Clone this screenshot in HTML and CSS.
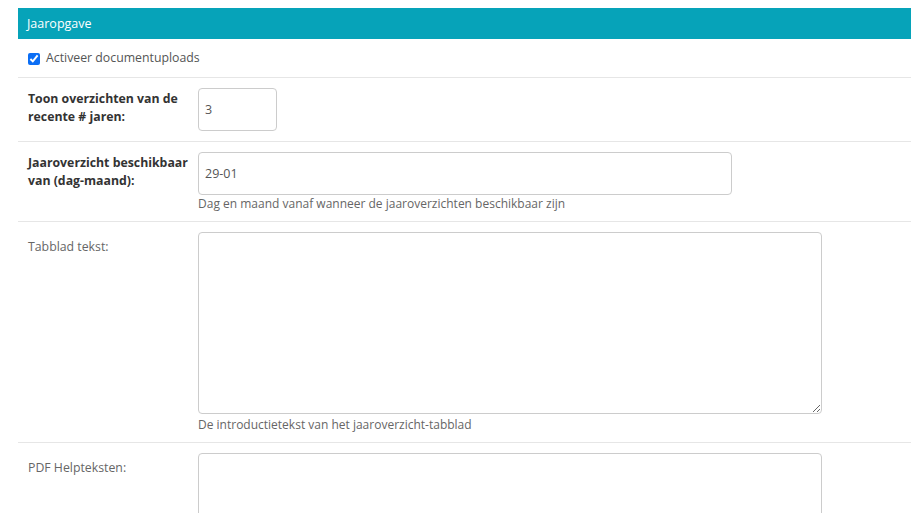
FILE: index.html
```html
<!DOCTYPE html>
<html lang="nl">
<head>
<meta charset="utf-8">
<title>Jaaropgave</title>
<link rel="stylesheet" href="styles.css">
</head>
<body>
<div class="panel">
  <div class="panel-head">Jaaropgave</div>
  <div class="row row-check">
    <label class="check"><input type="checkbox" checked> <span>Activeer documentuploads</span></label>
  </div>
  <div class="row">
    <div class="label bold">Toon overzichten van de recente # jaren:</div>
    <div class="field"><input class="input input-small" type="text" value="3"></div>
  </div>
  <div class="row">
    <div class="label bold">Jaaroverzicht beschikbaar van (dag-maand):</div>
    <div class="field">
      <input class="input input-wide" type="text" value="29-01">
      <div class="help">Dag en maand vanaf wanneer de jaaroverzichten beschikbaar zijn</div>
    </div>
  </div>
  <div class="row">
    <div class="label plain">Tabblad tekst:</div>
    <div class="field">
      <textarea class="area"></textarea>
      <div class="help help-area">De introductietekst van het jaaroverzicht-tabblad</div>
    </div>
  </div>
  <div class="row">
    <div class="label plain">PDF Helpteksten:</div>
    <div class="field">
      <textarea class="area"></textarea>
    </div>
  </div>
</div>
</body>
</html>
```
FILE: styles.css
```css
html, body {
  margin: 0;
  padding: 0;
  background: #fff;
  overflow: hidden;
  height: 513px;
}
body {
  font-family: "Open Sans", "Segoe UI", sans-serif;
  font-size: 13px;
  color: #333;
}
.panel {
  margin: 8px 0 0 18px;
}
.panel-head {
  background: #06a3b9;
  color: #fff;
  height: 31px;
  line-height: 31px;
  padding-left: 9px;
  font-size: 12.5px;
}
.row {
  display: grid;
  grid-template-columns: 170px 1fr;
  padding: 10px 0 10px 10px;
  border-bottom: 1px solid #e6e6e6;
}
.row-check {
  display: block;
  padding: 10px 0 10px 10px;
}
.check {
  display: flex;
  align-items: center;
  color: #555;
  font-size: 12.3px;
  line-height: 18px;
}
.check input {
  width: 12px;
  height: 12px;
  margin: 2px 6px 0 0;
  accent-color: #0b6ef5;
}
.label {
  line-height: 18px;
  font-size: 12.3px;
  padding-right: 8px;
}
.bold {
  font-weight: bold;
  color: #333;
  align-self: start;
  margin-top: 2px;
}
.plain {
  color: #666;
  padding-top: 6px;
}
.field {
  min-width: 0;
}
.input {
  box-sizing: border-box;
  height: 43px;
  margin: 0;
  border: 1px solid #ccc;
  border-radius: 4px;
  padding: 0 6px;
  font-family: inherit;
  font-size: 12.5px;
  color: #555;
  display: block;
  outline: none;
}
.input-small { width: 79px; }
.input-wide { width: 534px; }
.area {
  box-sizing: border-box;
  display: block;
  width: 624px;
  height: 182px;
  border: 1px solid #ccc;
  border-radius: 4px;
  font-family: inherit;
  margin: 0;
  outline: none;
}
.help {
  font-size: 12px;
  color: #666;
  line-height: 14px;
  margin-top: 2px;
}
.help-area {
  margin-top: 4px;
}
```
